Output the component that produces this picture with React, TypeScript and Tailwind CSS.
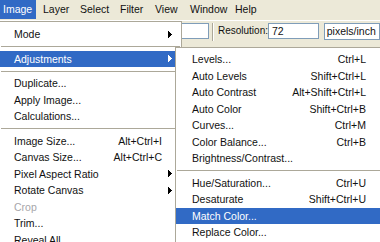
import React from "react";

type Item =
  | { sep: true }
  | { sep?: false; label: string; shortcut?: string; arrow?: boolean; active?: boolean; disabled?: boolean };

const mainItems: Item[] = [
  { label: "Mode", arrow: true },
  { sep: true },
  { label: "Adjustments", arrow: true, active: true },
  { sep: true },
  { label: "Duplicate..." },
  { label: "Apply Image..." },
  { label: "Calculations..." },
  { sep: true },
  { label: "Image Size...", shortcut: "Alt+Ctrl+I" },
  { label: "Canvas Size...", shortcut: "Alt+Ctrl+C" },
  { label: "Pixel Aspect Ratio", arrow: true },
  { label: "Rotate Canvas", arrow: true },
  { label: "Crop", disabled: true },
  { label: "Trim..." },
  { label: "Reveal All" },
];

const subItems: Item[] = [
  { label: "Levels...", shortcut: "Ctrl+L" },
  { label: "Auto Levels", shortcut: "Shift+Ctrl+L" },
  { label: "Auto Contrast", shortcut: "Alt+Shift+Ctrl+L" },
  { label: "Auto Color", shortcut: "Shift+Ctrl+B" },
  { label: "Curves...", shortcut: "Ctrl+M" },
  { label: "Color Balance...", shortcut: "Ctrl+B" },
  { label: "Brightness/Contrast..." },
  { sep: true },
  { label: "Hue/Saturation...", shortcut: "Ctrl+U" },
  { label: "Desaturate", shortcut: "Shift+Ctrl+U" },
  { label: "Match Color...", active: true },
  { label: "Replace Color..." },
];

function Arrow({ white }: { white?: boolean }) {
  return (
    <svg width="4" height="7" viewBox="0 0 4 7" shapeRendering="crispEdges">
      <path d="M0 0h1v7h-1zM1 1h1v5h-1zM2 2h1v3h-1zM3 3h1v1h-1z" fill={white ? "#ffffff" : "#000000"} />
    </svg>
  );
}

function MenuList({ items, sub }: { items: Item[]; sub?: boolean }) {
  return (
    <>
      {items.map((it, i) => {
        if (it.sep) {
          return (
            <div key={i} className="flex h-[8px] items-center px-[1px]">
              <div className="h-px w-full bg-[#ACA899]" />
            </div>
          );
        }
        const color = it.active ? "bg-[#316AC5] text-white" : it.disabled ? "text-[#A7A6AA]" : "text-[#111111]";
        return (
          <div
            key={i}
            className={`flex h-[16.5px] items-center ${sub ? "pl-[16px] pr-[23px]" : "pl-[14px]"} ${color}`}
          >
            <span className="flex-1 whitespace-nowrap">{it.label}</span>
            {it.shortcut && <span className="whitespace-nowrap">{it.shortcut}</span>}
            {!sub && (
              <div className="flex w-[19px] items-center pl-[6px]">{it.arrow && <Arrow white={it.active} />}</div>
            )}
          </div>
        );
      })}
    </>
  );
}

export default function App() {
  const menus = ["Layer", "Select", "Filter", "View", "Window", "Help"];
  const widths = ["w-[37px]", "w-[40px]", "w-[35px]", "w-[35px]", "w-[45px]", "w-[40px]"];
  return (
    <div
      className="relative h-[242px] w-[380px] overflow-hidden bg-[#ECE9D8] text-[10.5px] leading-none text-[#111111]"
      style={{ fontFamily: '"Liberation Sans", Arial, sans-serif' }}
    >
      {/* Menu bar */}
      <div className="flex h-[21px] items-start border-b border-white">
        <div className="flex h-[19px] w-[36px] items-center bg-[#316AC5] pl-[3px] text-white">Image</div>
        <div className="flex h-[19px] pl-[7px]">
          {menus.map((m, i) => (
            <div key={m} className={`flex h-[19px] items-center whitespace-nowrap ${widths[i]}`}>
              {m}
            </div>
          ))}
        </div>
      </div>

      {/* Options bar */}
      <div className="flex h-[26px] items-start pt-[2px]">
        <div className="ml-[150px] h-[16px] w-[63px] border border-[#7F9DB9] bg-white" />
        <div className="ml-[3px] h-[18px] w-[2px] border-l border-r border-l-[#ACA899] border-r-white" />
        <div className="ml-[4px] flex h-[16px] w-[51px] items-center whitespace-nowrap text-[10px]">Resolution:</div>
        <div className="flex h-[16px] w-[54px] items-center border border-[#7F9DB9] bg-white pl-[3px]">72</div>
        <div className="ml-[5px] flex h-[17px] w-[60px] items-center whitespace-nowrap border border-[#7F9DB9] bg-white pl-[2px]">
          pixels/inch
        </div>
      </div>

      {/* Image menu */}
      <div className="absolute left-0 top-[21px] h-[240px] w-[182px] border-r border-t border-[#ACA899] bg-white pt-[4px]">
        <MenuList items={mainItems} />
      </div>

      {/* Adjustments submenu */}
      <div className="absolute left-[175px] top-[47px] h-[200px] w-[215px] border border-[#ACA899] bg-white pt-[3px]">
        <MenuList items={subItems} sub />
      </div>
    </div>
  );
}
